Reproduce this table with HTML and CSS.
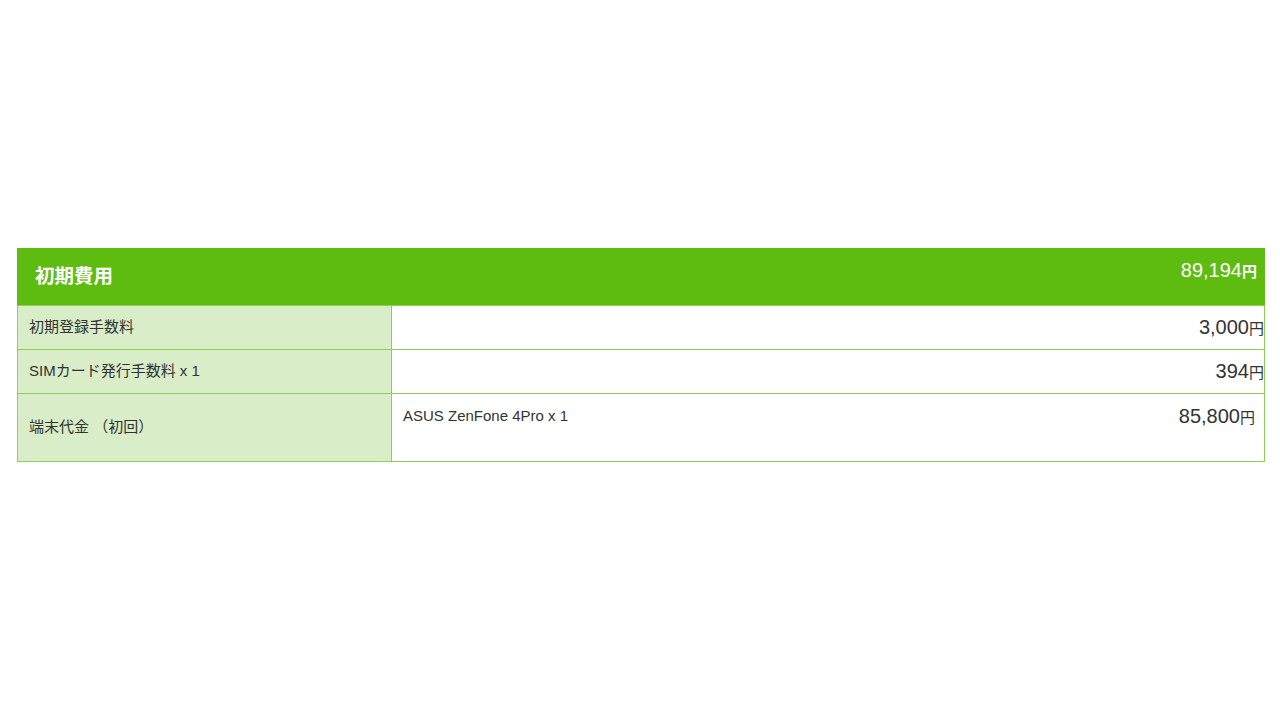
FILE: index.html
```html
<!DOCTYPE html>
<html lang="ja">
<head>
<meta charset="utf-8">
<link rel="stylesheet" href="styles.css">
</head>
<body>
<div class="page">
  <div class="fee">
    <div class="fee-head">
      <div class="fee-title">初期費用</div>
      <div class="fee-total">89,194<span class="yen">円</span></div>
    </div>
    <div class="row r1">
      <div class="label">初期登録手数料</div>
      <div class="value"><span class="price flush">3,000<span class="yen">円</span></span></div>
    </div>
    <div class="row r2">
      <div class="label">SIMカード発行手数料 x 1</div>
      <div class="value"><span class="price flush">394<span class="yen">円</span></span></div>
    </div>
    <div class="row r3">
      <div class="label">端末代金 （初回）</div>
      <div class="value top">
        <span class="item">ASUS ZenFone 4Pro x 1</span>
        <span class="price inset">85,800<span class="yen">円</span></span>
      </div>
    </div>
  </div>
</div>
</body>
</html>
```

FILE: styles.css
```css
html, body {
  margin: 0;
  padding: 0;
  background: #ffffff;
}
body {
  font-family: "Liberation Sans", Arial, "Noto Sans CJK JP", sans-serif;
  color: #333333;
}
.page {
  padding: 248px 15px 0 17px;
}
.fee {
  border-left: 1px solid #8ccf55;
  border-right: 1px solid #8ccf55;
  border-bottom: 1px solid #8ccf55;
}
.fee-head {
  background: #5ebc10;
  height: 57px;
  display: flex;
  justify-content: space-between;
  align-items: flex-start;
  margin: 0 -1px;
  color: #ffffff;
}
.fee-title {
  font-weight: bold;
  font-size: 19.5px;
  line-height: 22px;
  padding: 17px 0 0 18px;
}
.fee-total {
  font-size: 20px;
  line-height: 22px;
  padding: 11px 8px 0 0;
}
.fee-total .yen {
  font-size: 15px;
  font-weight: bold;
}
.row {
  display: grid;
  grid-template-columns: 374px 1fr;
  border-top: 1px solid #8ccf55;
}
.r1, .r2 { height: 43px; }
.r3 { height: 67px; }
.label {
  background: #d9edc8;
  border-right: 1px solid #8ccf55;
  font-size: 15px;
  line-height: 18px;
  display: flex;
  align-items: center;
  padding: 0 0 2px 11px;
}
.value {
  display: flex;
  justify-content: space-between;
  align-items: center;
}
.value.top {
  align-items: flex-start;
  padding: 13px 0 0 11px;
}
.item {
  font-size: 15px;
  line-height: 18px;
}
.price {
  font-size: 20px;
  line-height: 22px;
  margin-left: auto;
}
.price .yen {
  font-size: 15px;
}
.flush { margin-right: 0; }
.inset { margin-right: 9px; margin-top: -2px; }
```
